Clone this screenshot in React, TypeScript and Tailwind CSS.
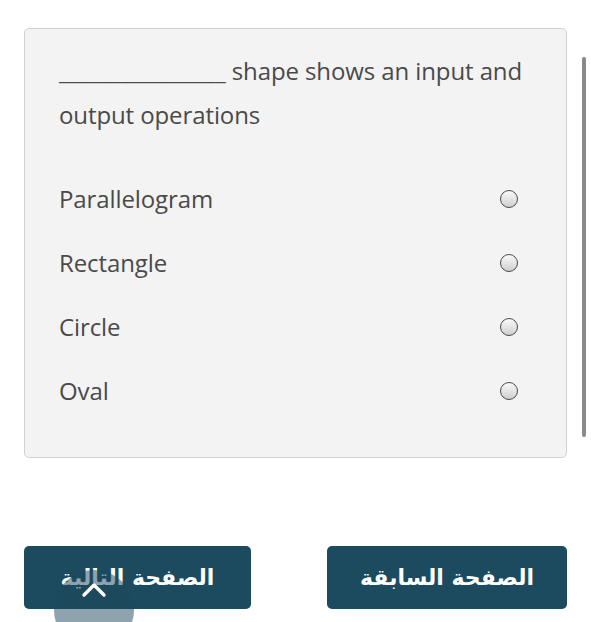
import { ChevronUp } from "lucide-react";

const options = ["Parallelogram", "Rectangle", "Circle", "Oval"];

const Radio = () => (
  <span className="block w-[18px] h-[18px] rounded-full border-[1.5px] border-[#4a4a4a] bg-gradient-to-b from-[#fafafa] to-[#d0d0d0]" />
);

export default function App() {
  return (
    <div className="relative w-[591px] h-[622px] bg-white overflow-hidden font-['Open_Sans',sans-serif]">
      <div className="flex items-start pl-[24px] pt-[28px]">
        <div className="w-[543px] rounded-[5px] border border-[#d2d2d2] bg-[#f3f3f3] pl-[34px] pr-[48px] pt-[20px] pb-[34px]">
          <p className="w-[490px] text-[24px] leading-[44px] text-[#4a4a4a] tracking-[-0.1px]">
            ________________ shape shows an input and output operations
          </p>
          <div className="mt-[30px] flex flex-col">
            {options.map((opt) => (
              <label key={opt} className="flex h-[64px] items-center justify-between">
                <span className="text-[24px] text-[#4a4a4a] tracking-[-0.1px]">{opt}</span>
                <Radio />
              </label>
            ))}
          </div>
        </div>
        <div className="ml-[15px] mt-[29px] w-[4px] h-[380px] rounded-full bg-[#8a8a8a]" />
      </div>

      <div className="mt-[88px] flex justify-between pl-[24px] pr-[24px]">
        <button className="w-[227px] h-[63px] rounded-[5px] bg-[#1c4a5e] text-white text-[22px] font-bold font-['DejaVu_Sans',sans-serif]">
          الصفحة التالية
        </button>
        <button className="w-[240px] h-[63px] rounded-[5px] bg-[#1c4a5e] text-white text-[22px] font-bold font-['DejaVu_Sans',sans-serif]">
          الصفحة السابقة
        </button>
      </div>

      <div className="absolute left-[54px] top-[570px] w-[80px] h-[80px] rounded-full bg-[rgba(30,72,92,0.5)] flex justify-center">
        <ChevronUp size={40} strokeWidth={2} className="text-white" />
      </div>
    </div>
  );
}
